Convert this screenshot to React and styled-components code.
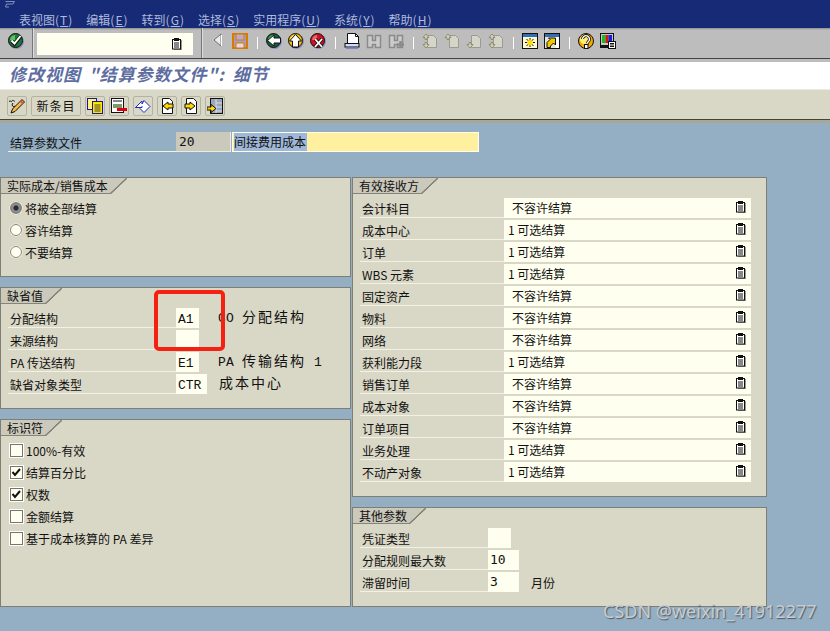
import styled, { createGlobalStyle } from "styled-components";

const GlobalStyle = createGlobalStyle`
  html, body { margin: 0; padding: 0; background: #94afc3; }
  body { font-family: "Noto Sans CJK SC", "Liberation Sans", sans-serif; font-size: 12px; color: #111; }
`;

const Page = styled.div`
  position: relative;
  width: 830px;
  height: 631px;
  overflow: hidden;
  background: #94afc3;
`;

// Menu bar
const MenuBar = styled.div`
  height: 28px;
  box-sizing: border-box;
  background: #172a75;
  display: flex;
  gap: 13px;
  padding: 12px 0 0 19px;
  position: relative;
`;
const MenuItem = styled.span`
  color: #aebbdc;
  font-size: 12px;
  line-height: 16px;
  white-space: nowrap;
`;
const MenuKey = styled.span`
  letter-spacing: 1px;
  u { text-underline-offset: 1px; }
`;
const WindowMark = styled.svg`
  position: absolute;
  left: 4px;
  top: 0;
`;

// System toolbar
const SysBar = styled.div`
  height: 34px;
  box-sizing: border-box;
  background: linear-gradient(#8d8d93 0, #bdbdbd 2px);
  border-bottom: 3px solid #bdbdbd;
  display: flex;
  align-items: flex-start;
  padding: 5px 0 0 8px;
  position: relative;
  &::after {
    content: "";
    position: absolute;
    left: 0;
    right: 0;
    bottom: 0;
    height: 1px;
    background: #44444a;
  }
`;
const IconSlot = styled.span`
  width: ${(p) => p.$w || 16}px;
  height: 16px;
  flex: none;
  margin-left: ${(p) => p.$ml || 0}px;
  margin-right: ${(p) => p.$mr || 0}px;
  svg { display: block; }
`;
const ThickSep = styled.span`
  width: 2px;
  height: 30px;
  margin: -5px 3px 0 8px;
  background: linear-gradient(to right, #77777a 50%, #dcdcdc 50%);
  flex: none;
`;
const ThinSep = styled.span`
  width: 1px;
  height: 12px;
  margin: 4px 8px 0 9px;
  background: #fff;
  flex: none;
`;
const CommandField = styled.div`
  width: 156px;
  height: 22px;
  background: #fffff0;
  flex: none;
  display: flex;
  justify-content: flex-end;
  align-items: center;
  padding-right: 11px;
  box-sizing: border-box;
`;

// Title
const TitleBar = styled.div`
  height: 28px;
  box-sizing: border-box;
  background: #fff;
  border-bottom: 1px solid #ecebdd;
  color: #5d6d9f;
  font-size: 17px;
  font-weight: 700;
  font-style: italic;
  letter-spacing: 1px;
  word-spacing: 3px;
  line-height: 24px;
  padding-left: 9px;
  white-space: pre;
`;

// Application toolbar
const AppBar = styled.div`
  height: 33px;
  box-sizing: border-box;
  background: #d9d7c5;
  border-bottom: 3px solid #a9a795;
  display: flex;
  gap: 4px;
  padding: 6px 0 0 7px;
  position: relative;
  &::after {
    content: "";
    position: absolute;
    left: 0;
    right: 0;
    bottom: 0;
    height: 1px;
    background: #44443e;
  }
`;
const AppButton = styled.button`
  width: ${(p) => p.$w || 20}px;
  height: 20px;
  box-sizing: border-box;
  padding: 0;
  margin: 0;
  border: 1px solid #b4b2a1;
  border-radius: 2px;
  background: #d9d7c5;
  color: #111;
  font: 12px/18px "Noto Sans CJK SC", sans-serif;
  letter-spacing: 1px;
  display: flex;
  align-items: center;
  justify-content: center;
`;

// Screen area
const Content = styled.div`
  padding-top: 9px;
`;
const HeaderRow = styled.div`
  display: flex;
  height: 20px;
  padding-left: 8px;
`;
const HeaderLabel = styled.div`
  width: 168px;
  height: 20px;
  box-sizing: border-box;
  border-bottom: 1px solid #f2f1e4;
  padding-left: 2px;
  line-height: 21px;
  flex: none;
`;
const HeaderValue = styled.div`
  width: 55px;
  height: 20px;
  box-sizing: border-box;
  background: #cbc9bc;
  border: 1px solid #ecebdd;
  border-width: 0 1px 1px 0;
  font: 13px/20px "DejaVu Sans Mono", monospace;
  padding-left: 3px;
  flex: none;
`;
const HeaderText = styled.div`
  width: 247px;
  height: 20px;
  margin-left: 1px;
  box-sizing: border-box;
  background: #fff09f;
  border: 1px solid #fffff0;
  padding-left: 1px;
  line-height: 18px;
  flex: none;
  mark {
    background: #9fb7d8;
    color: #111;
    display: inline-block;
    height: 18px;
    padding-right: 1px;
  }
`;
const Columns = styled.div`
  display: grid;
  grid-template-columns: 351px 415px;
  column-gap: 1px;
  margin-top: 25px;
`;
const Column = styled.div`
  display: flex;
  flex-direction: column;
  gap: 10px;
`;
const Group = styled.section`
  height: ${(p) => p.$h}px;
  box-sizing: border-box;
  border: 1px solid #7f7e74;
  background: #d9d7c5;
`;
const GroupTab = styled.div`
  display: flex;
  height: 16px;
  width: max-content;
`;
const TabText = styled.div`
  background: #cbc9bb;
  border-bottom: 1px solid #85847a;
  padding: 0 2px 0 6px;
  line-height: 15px;
  height: 16px;
  box-sizing: border-box;
  white-space: nowrap;
`;
const TabSlope = styled.div`
  width: 17px;
  height: 16px;
  background: linear-gradient(
    to bottom right,
    #cbc9bb calc(50% - 1px),
    #85847a calc(50% - 0.5px),
    #85847a calc(50% + 0.5px),
    transparent calc(50% + 1px)
  );
`;
const Options = styled.div`
  padding: 4px 0 0 9px;
  display: flex;
  flex-direction: column;
  gap: 2px;
`;
const Option = styled.div`
  display: flex;
  align-items: center;
  gap: 3px;
  height: 20px;
  white-space: pre;
`;
const RadioDot = styled.span`
  width: 12px;
  height: 12px;
  box-sizing: border-box;
  border-radius: 50%;
  background: ${(p) =>
    p.$on ? "radial-gradient(circle, #23293f 0 2px, #8a8a86 3px)" : "#fffff0"};
  border: 1px solid #85847a;
  box-shadow: 0 0 0 0.5px #fff;
  flex: none;
`;
const CheckBox = styled.span`
  width: 13px;
  height: 13px;
  box-sizing: border-box;
  background: #fffff0;
  border: 1px solid #77766c;
  outline: 1px solid #fff;
  flex: none;
  svg { display: block; }
`;
const Rows = styled.div`
  padding: 4px 0 0 7px;
  display: flex;
  flex-direction: column;
  gap: 2px;
`;
const Row = styled.div`
  display: flex;
  height: 20px;
`;
const RowLabel = styled.div`
  width: ${(p) => p.$w}px;
  height: 20px;
  box-sizing: border-box;
  flex: none;
  border-bottom: 1px solid #f2f1e4;
  padding-left: 2px;
  line-height: 21px;
  white-space: pre;
`;
const CodeField = styled.div`
  width: ${(p) => p.$w}px;
  height: 20px;
  box-sizing: border-box;
  background: #fffff0;
  flex: none;
  padding-left: 2px;
  font: 13px/${(p) => (p.$sans ? 19 : 23)}px ${(p) =>
    p.$sans ? '"DejaVu Sans Mono"' : '"Liberation Mono"'}, monospace;
  color: #111;
`;
const CodeText = styled.div`
  margin-left: ${(p) => p.$ml}px;
  font: 14px/17px "Noto Sans CJK SC", sans-serif;
  letter-spacing: 2px;
  white-space: pre;
`;
const CodeKey = styled.span`
  font: 13px/17px "Liberation Mono", monospace;
  letter-spacing: 0.2px;
`;
const UnitText = styled.div`
  margin-left: 12px;
  line-height: 21px;
`;
const SelectField = styled.div`
  width: 247px;
  height: 20px;
  box-sizing: border-box;
  background: #fffff0;
  flex: none;
  display: flex;
  justify-content: space-between;
  align-items: center;
  padding: 0 5px 2px ${(p) => (p.$on ? 4 : 8)}px;
  white-space: pre;
`;

// Overlays: the marker drawn over the picture and the site watermark
const Marker = styled.div`
  position: absolute;
  left: 154px;
  top: 290px;
  width: 71px;
  height: 61px;
  box-sizing: border-box;
  border: 4px solid #f5200f;
  border-radius: 5px;
`;
const Watermark = styled.div`
  position: absolute;
  left: 603px;
  top: 599px;
  color: #c8ccd0;
  font: 18px/24px "Noto Sans", sans-serif;
  text-shadow: 1px 1px 1px #4f5a63;
  white-space: nowrap;
`;

// Icons
const Icon = ({ children, w = 16, h = 16 }) => (
  <svg width={w} height={h} viewBox={`0 0 ${w} ${h}`} fill="none">
    {children}
  </svg>
);

const Lookup = () => (
  <svg width="10" height="12" viewBox="0 0 10 12">
    <rect x="2" y="2" width="8" height="10" fill="#9a9a90" />
    <rect x="0.5" y="1.5" width="8" height="9.5" fill="#fff" stroke="#111" />
    <rect x="2" y="0" width="5" height="3" fill="#111" />
    <path d="M2 5h5M2 7h5M2 9h5" stroke="#111" />
  </svg>
);

const Round = ({ fill, light, children }) => (
  <Icon>
    <circle cx="8.5" cy="8.5" r="7.5" fill="#8f8fc0" />
    <circle cx="7.5" cy="7.5" r="7" fill={fill} stroke="#111" />
    <path d="M2 7a5.5 5.5 0 0 1 5-5v5z" fill={light} />
    {children}
  </Icon>
);

const EnterIcon = () => (
  <Round fill="#1d7a35" light="#5fbf66">
    <path d="M3.5 8l3 3 6-7.5" stroke="#111" strokeWidth="3.6" />
    <path d="M3.5 7.5l3 3 6-7.5" stroke="#fff" strokeWidth="2" />
  </Round>
);
const BackIcon = () => (
  <Round fill="#15623a" light="#3fae4c">
    <path d="M1.5 7.5L8 2v3h6.5v5H8v3z" fill="#fff" stroke="#111" />
  </Round>
);
const UpIcon = () => (
  <Round fill="#f2c000" light="#fff07a">
    <path d="M7.5 1.5L13.5 8h-3v6h-6V8h-3z" fill="#fff" stroke="#111" />
  </Round>
);
const CancelIcon = () => (
  <Round fill="#d01020" light="#f06070">
    <path d="M5 6l7 8M12 6l-7 8" stroke="#111" strokeWidth="3.4" />
    <path d="M5 6l7 8M12 6l-7 8" stroke="#fff" strokeWidth="1.8" />
  </Round>
);
const PrevIcon = () => (
  <svg width="9" height="14" viewBox="0 0 9 14">
    <path d="M8 1v12L1 7z" fill="#ececec" stroke="#707070" />
    <path d="M8.5 2v11" stroke="#fff" />
  </svg>
);
const SaveIcon = () => (
  <Icon>
    <rect x="1" y="1" width="14" height="14" fill="#ad9cc2" stroke="#d97b00" strokeWidth="2" />
    <rect x="4" y="1" width="8" height="6" fill="#b9abcd" stroke="#d97b00" />
    <rect x="4" y="10" width="8" height="5" fill="#e2dcea" stroke="#d97b00" />
  </Icon>
);
const PrintIcon = () => (
  <Icon>
    <path d="M3.5.5h8l3 3v8h-11z" fill="#fff" stroke="#111" />
    <path d="M11.5.5v3h3" stroke="#111" />
    <rect x="1" y="10.5" width="14" height="3.5" fill="#cfd8ff" stroke="#111" />
    <rect x="2" y="14.5" width="12" height="1.5" fill="#7a86c8" />
  </Icon>
);
const FindIcon = ({ plus }) => (
  <Icon>
    <path d="M1.5 2.5h5v5h3v-5h5v12h-5v-3h-3v3h-5z" fill="#cbcbcb" stroke="#8a8a8a" strokeWidth="1.5" />
    {plus && <path d="M9 11.5h7M12.5 8v7" stroke="#8a8a8a" strokeWidth="2.5" />}
  </Icon>
);
const PageArrow = ({ dir }) => (
  <Icon>
    <path d="M5.5 2.5h6l3 3v9h-9z" fill="#d6d6c8" stroke="#9a9a90" />
    {(dir === "up" || dir === "both") && <path d="M4 1L7 4.5H5v2H3v-2H1z" fill="#d9d9a8" stroke="#8c8c80" />}
    {(dir === "down" || dir === "both") && <path d="M4 15L7 11.5H5v-2H3v2H1z" fill="#d9d9a8" stroke="#8c8c80" />}
  </Icon>
);
const CreateSession = () => (
  <Icon>
    <rect x="0.5" y="0.5" width="15" height="15" fill="#fffbd0" stroke="#111" />
    <rect x="1" y="1" width="14" height="3" fill="#2f6fb2" />
    <path d="M8 5v9M3 9.5h10M4.5 6l7 7M11.5 6l-7 7" stroke="#111" />
    <path d="M8 6.5v6M5 9.5h6M6 7.5l4 4M10 7.5l-4 4" stroke="#ffe000" strokeWidth="1.5" />
  </Icon>
);
const Shortcut = () => (
  <Icon>
    <rect x="0.5" y="0.5" width="15" height="15" fill="#e6e6d0" stroke="#111" />
    <rect x="1" y="1" width="14" height="3" fill="#2f6fb2" />
    <rect x="11.5" y="4" width="3.5" height="11" fill="#fff" />
    <path d="M3 14.5V9.5l3-3-1.5-1.5H11.5v7l-2-2-3 3v1.5z" fill="#f5c800" stroke="#111" />
  </Icon>
);
const HelpIcon = () => (
  <Icon>
    <circle cx="8" cy="8" r="7.5" fill="#f5a800" stroke="#111" />
    <circle cx="7" cy="6.5" r="5" fill="#fff070" />
    <path d="M4.5 6a3.5 3.5 0 1 1 5.5 3l-1 1.5" stroke="#111" strokeWidth="3" />
    <path d="M4.5 6a3.5 3.5 0 1 1 5.5 3l-1 1.5" stroke="#fff" strokeWidth="1.4" />
    <rect x="6.5" y="11.5" width="3.5" height="4" fill="#fff" stroke="#111" />
  </Icon>
);
const LayoutIcon = () => (
  <Icon>
    <rect x="0.5" y="0.5" width="13" height="12" fill="#c9c9c9" stroke="#111" />
    <rect x="2" y="2" width="3.5" height="8" fill="#10c020" />
    <rect x="5.5" y="2" width="3" height="8" fill="#e01010" />
    <rect x="8.5" y="2" width="3.5" height="8" fill="#1020e0" />
    <path d="M0 14h8" stroke="#111" strokeWidth="2" />
    <rect x="8.5" y="8.5" width="7" height="7" fill="#fff" stroke="#111" />
    <path d="M10 10.5h4M10 12h4M10 13.5h4" stroke="#111" />
  </Icon>
);
const PencilIcon = () => (
  <Icon>
    <path d="M0 4c1-3 2 1 3-1s2 1 3 0" stroke="#111" />
    <path d="M4 5c-2 2 0 5 2 3" stroke="#111" />
    <path d="M13 1.5l2.5 2.5-9.5 9.5-4 1.5 1.5-4z" fill="#f2b84a" stroke="#111" />
    <path d="M11.5 3l2.5 2.5" stroke="#e05050" strokeWidth="2" />
  </Icon>
);
const CopyIcon = () => (
  <Icon>
    <rect x="0.5" y="0.5" width="9" height="11" fill="#fff27a" stroke="#1a1a8a" />
    <rect x="5.5" y="3.5" width="10" height="12" fill="#ffe600" stroke="#1a1a8a" />
    <path d="M7.5 7h6M7.5 9h6M7.5 11h6M7.5 13h6" stroke="#444" />
  </Icon>
);
const DeleteIcon = () => (
  <Icon>
    <rect x="0.5" y="0.5" width="12" height="14" fill="#fff" stroke="#111" />
    <path d="M2 3h9" stroke="#111" />
    <rect x="2" y="6" width="9" height="4" fill="#7a9a66" />
    <rect x="6" y="10" width="10" height="3" fill="#e00010" />
  </Icon>
);
const UndoIcon = () => (
  <Icon>
    <path d="M0.5 9.5L7 3v3l2-3.5 6 6-6 6-4-4 2-2v1z" fill="#fff" stroke="#1a2ac0" />
    <path d="M0.5 9.5h6" stroke="#1a2ac0" />
  </Icon>
);
const DocArrow = ({ right }) => (
  <Icon>
    <path d="M3.5.5h7l3 3v12h-10z" fill="#fff" stroke="#111" />
    <path d={right ? "M2 6h5V4l5 4-5 4v-2H2z" : "M14 6H9V4L4 8l5 4v-2h5z"} fill="#ffd800" stroke="#111" />
  </Icon>
);
const TableArrow = () => (
  <Icon>
    <rect x="3.5" y="0.5" width="12" height="15" fill="#9aa7b8" stroke="#111" />
    <path d="M9 1v14M9 5h6M9 9h6M9 13h6" stroke="#dde" />
    <path d="M0 9h4V6.5L9 10.5 4 14.5V12H0z" fill="#ffd800" stroke="#111" />
  </Icon>
);

const Check = () => (
  <svg width="11" height="11" viewBox="0 0 11 11">
    <path d="M1.5 5l2.5 3 5-6" stroke="#111" strokeWidth="2" fill="none" />
  </svg>
);

const menus = [
  ["表视图", "T"],
  ["编辑", "E"],
  ["转到", "G"],
  ["选择", "S"],
  ["实用程序", "U"],
  ["系统", "Y"],
  ["帮助", "H"],
];

const receivers = [
  ["会计科目", "不容许结算"],
  ["成本中心", "1 可选结算"],
  ["订单", "1 可选结算"],
  ["WBS 元素", "1 可选结算"],
  ["固定资产", "不容许结算"],
  ["物料", "不容许结算"],
  ["网络", "不容许结算"],
  ["获利能力段", "1 可选结算"],
  ["销售订单", "不容许结算"],
  ["成本对象", "不容许结算"],
  ["订单项目", "不容许结算"],
  ["业务处理", "1 可选结算"],
  ["不动产对象", "1 可选结算"],
];

const flags = [
  ["100%-有效", false],
  ["结算百分比", true],
  ["权数", true],
  ["金额结算", false],
  ["基于成本核算的 PA 差异", false],
];

function Tab({ children }) {
  return (
    <GroupTab>
      <TabText>{children}</TabText>
      <TabSlope />
    </GroupTab>
  );
}

export default function App() {
  return (
    <Page>
      <GlobalStyle />
      <MenuBar>
        <WindowMark width="11" height="8" viewBox="0 0 11 8" fill="none">
          <path d="M1.5 1.5h9L9 4H2.5l-1 3H5" stroke="#7f8fc4" />
        </WindowMark>
        {menus.map(([name, key]) => (
          <MenuItem key={key}>
            {name}
            <MenuKey>(<u>{key}</u>)</MenuKey>
          </MenuItem>
        ))}
      </MenuBar>

      <SysBar>
        <IconSlot><EnterIcon /></IconSlot>
        <ThickSep />
        <CommandField><Lookup /></CommandField>
        <ThickSep />
        <IconSlot $w={9} $ml={7} $mr={10}><PrevIcon /></IconSlot>
        <IconSlot><SaveIcon /></IconSlot>
        <ThinSep />
        <IconSlot><BackIcon /></IconSlot>
        <IconSlot $ml={6}><UpIcon /></IconSlot>
        <IconSlot $ml={6}><CancelIcon /></IconSlot>
        <ThinSep />
        <IconSlot><PrintIcon /></IconSlot>
        <IconSlot $ml={6}><FindIcon /></IconSlot>
        <IconSlot $ml={6}><FindIcon plus /></IconSlot>
        <ThinSep />
        <IconSlot><PageArrow dir="both" /></IconSlot>
        <IconSlot $ml={6}><PageArrow dir="up" /></IconSlot>
        <IconSlot $ml={6}><PageArrow dir="down" /></IconSlot>
        <IconSlot $ml={6}><PageArrow dir="both" /></IconSlot>
        <ThinSep />
        <IconSlot><CreateSession /></IconSlot>
        <IconSlot $ml={6}><Shortcut /></IconSlot>
        <ThinSep />
        <IconSlot><HelpIcon /></IconSlot>
        <IconSlot $ml={6}><LayoutIcon /></IconSlot>
      </SysBar>

      <TitleBar>修改视图 "结算参数文件": 细节</TitleBar>

      <AppBar>
        <AppButton><PencilIcon /></AppButton>
        <AppButton $w={50}>新条目</AppButton>
        <AppButton><CopyIcon /></AppButton>
        <AppButton><DeleteIcon /></AppButton>
        <AppButton><UndoIcon /></AppButton>
        <AppButton><DocArrow /></AppButton>
        <AppButton><DocArrow right /></AppButton>
        <AppButton><TableArrow /></AppButton>
      </AppBar>

      <Content>
        <HeaderRow>
          <HeaderLabel>结算参数文件</HeaderLabel>
          <HeaderValue>20</HeaderValue>
          <HeaderText><mark>间接费用成本</mark></HeaderText>
        </HeaderRow>

        <Columns>
          <Column>
            <Group $h={100}>
              <Tab>实际成本/销售成本</Tab>
              <Options>
                <Option><RadioDot $on />将被全部结算</Option>
                <Option><RadioDot />容许结算</Option>
                <Option><RadioDot />不要结算</Option>
              </Options>
            </Group>

            <Group $h={122}>
              <Tab>缺省值</Tab>
              <Rows>
                <Row>
                  <RowLabel $w={168}>分配结构</RowLabel>
                  <CodeField $w={23}>A1</CodeField>
                  <CodeText $ml={19}><CodeKey>CO </CodeKey>分配结构</CodeText>
                </Row>
                <Row>
                  <RowLabel $w={168}>来源结构</RowLabel>
                  <CodeField $w={23} />
                </Row>
                <Row>
                  <RowLabel $w={168}>PA 传送结构</RowLabel>
                  <CodeField $w={23}>E1</CodeField>
                  <CodeText $ml={19}><CodeKey>PA </CodeKey>传输结构<CodeKey> 1</CodeKey></CodeText>
                </Row>
                <Row>
                  <RowLabel $w={168}>缺省对象类型</RowLabel>
                  <CodeField $w={31}>CTR</CodeField>
                  <CodeText $ml={12}>成本中心</CodeText>
                </Row>
              </Rows>
            </Group>

            <Group $h={188}>
              <Tab>标识符</Tab>
              <Options>
                {flags.map(([text, on]) => (
                  <Option key={text}>
                    <CheckBox>{on && <Check />}</CheckBox>
                    {text}
                  </Option>
                ))}
              </Options>
            </Group>
          </Column>

          <Column>
            <Group $h={320}>
              <Tab>有效接收方</Tab>
              <Rows>
                {receivers.map(([name, value]) => (
                  <Row key={name}>
                    <RowLabel $w={144}>{name}</RowLabel>
                    <SelectField $on={value.startsWith("1")}>
                      {value}
                      <Lookup />
                    </SelectField>
                  </Row>
                ))}
              </Rows>
            </Group>

            <Group $h={100}>
              <Tab>其他参数</Tab>
              <Rows>
                <Row>
                  <RowLabel $w={128}>凭证类型</RowLabel>
                  <CodeField $w={23} />
                </Row>
                <Row>
                  <RowLabel $w={128}>分配规则最大数</RowLabel>
                  <CodeField $w={31} $sans>10</CodeField>
                </Row>
                <Row>
                  <RowLabel $w={128}>滞留时间</RowLabel>
                  <CodeField $w={31} $sans>3</CodeField>
                  <UnitText>月份</UnitText>
                </Row>
              </Rows>
            </Group>
          </Column>
        </Columns>
      </Content>

      <Marker />
      <Watermark>CSDN @weixin_41912277</Watermark>
    </Page>
  );
}
